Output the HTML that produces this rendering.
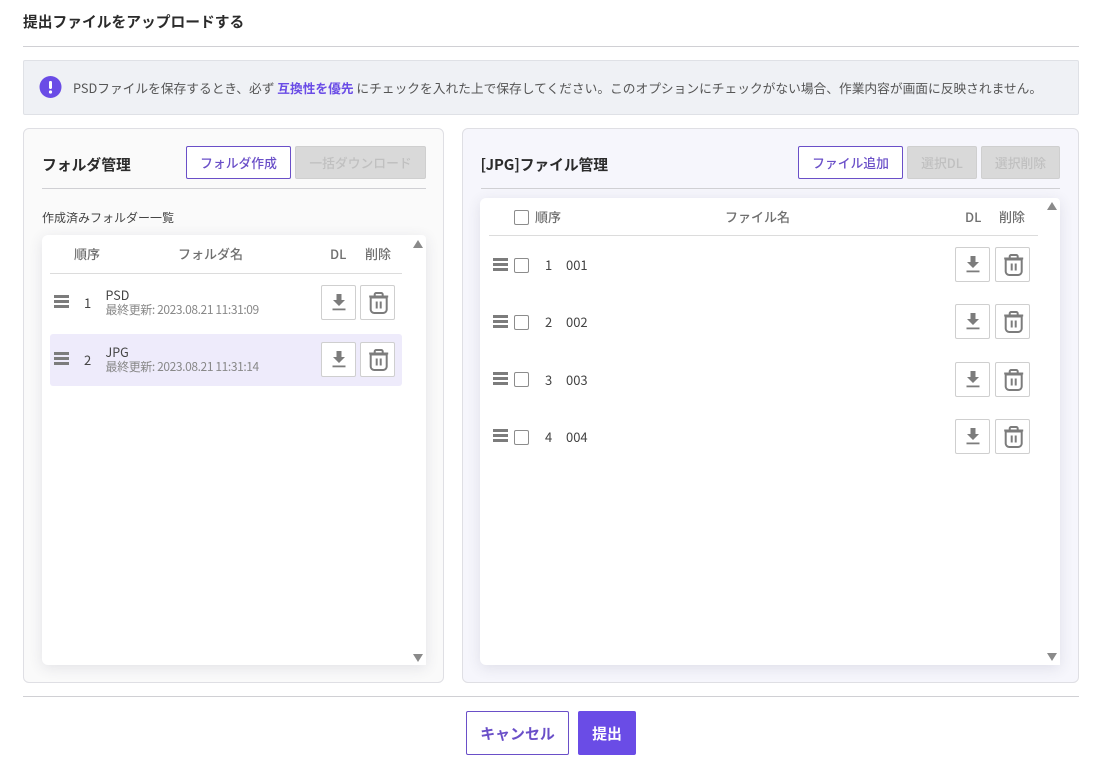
<!DOCTYPE html>
<html lang="ja">
<head>
<meta charset="utf-8">
<title>提出ファイルをアップロードする</title>
<style>
*{box-sizing:border-box}
html,body{margin:0;padding:0;width:1093px;height:767px;overflow:hidden;background:#fff}
body{position:relative;font-family:"Noto Sans CJK JP","Liberation Sans",sans-serif;color:#333;font-size:12px}
.a{position:absolute;white-space:nowrap;line-height:1}
.line{position:absolute;height:1px;background:#d0d0d4}
.panel{position:absolute;top:128px;height:555px;border:1px solid #dfdfe4;border-radius:6px}
.list{position:absolute;background:#fff;border-radius:6px 4px 0 6px;box-shadow:0 3px 14px rgba(60,60,90,.12)}
.btn{position:absolute;top:146px;height:33px;border-radius:2px;font-size:12.800px;font-weight:500;display:flex;align-items:center;justify-content:center;white-space:nowrap}
.pri{background:#fff;border:1px solid #6a4fc8;color:#6a4fc8}
.dis{background:#d9d9d9;border:1px solid #cfcfcf;color:#c0c0c0}
.th{position:absolute;white-space:nowrap;line-height:1;font-size:13px;font-weight:500;color:#6f6f6f}
.ib{position:absolute;width:35px;height:35px;background:#fff;border:1px solid #cfcfcf;border-radius:2px}
.ib svg{position:absolute;left:-1px;top:-1px}
.burger{position:absolute;width:15px;height:13px;border-top:3px solid #7c7c7c;border-bottom:3px solid #7c7c7c}
.burger:after{content:"";position:absolute;left:0;right:0;top:2px;height:3px;background:#7c7c7c}
.cb{position:absolute;width:15px;height:15px;background:#fff;border:1.500px solid #8c8c8c;border-radius:2px}
.row{position:absolute;left:50px;top:334px;width:352px;height:52px;background:#eeebfb;border-radius:3px}
.tu{width:0;height:0;border-left:5.500px solid transparent;border-right:5.500px solid transparent;border-bottom:8px solid #8a8a8a;position:absolute}
.td{width:0;height:0;border-left:5.500px solid transparent;border-right:5.500px solid transparent;border-top:8px solid #8a8a8a;position:absolute}
.n{font-size:13px;color:#444}
.t{font-size:12px;letter-spacing:-.4px;color:#888}
</style>
</head>
<body>
<svg width="0" height="0" style="position:absolute">
<defs>
<g id="dl"><path d="M15.500 9h5v6h3.500l-6 6-6-6h3.500z" fill="#7c7c7c"/><rect x="11.500" y="23.500" width="13" height="1.800" fill="#7c7c7c"/></g>
<g id="tr" fill="none" stroke="#7c7c7c" stroke-width="2" transform="translate(-.8 0)"><path d="M11.500 12.500h16v12a3.500 3.500 0 0 1-3.500 3.500h-9a3.500 3.500 0 0 1-3.500-3.500z"/><path d="M10 11.500h19"/><path d="M15.500 11V9.500a1.500 1.500 0 0 1 1.500-1.500h5a1.500 1.500 0 0 1 1.500 1.500V11"/><path d="M17.500 16.500v7M21.500 16.500v7"/></g>
</defs>
</svg>

<div class="a" style="left:23px;top:15px;font-size:14.750px;font-weight:700;color:#2b2b2b">提出ファイルをアップロードする</div>
<div class="line" style="left:23px;top:46px;width:1056px"></div>

<div style="position:absolute;left:23px;top:60px;width:1056px;height:55px;background:#eff1f5;border:1px solid #dfe1e6;border-radius:2px"></div>
<svg style="position:absolute;left:39px;top:76px" width="23" height="23"><circle cx="11.500" cy="11" r="11" fill="#6a4ce6"/><rect x="10" y="5" width="3" height="8" rx="1.200" fill="#fff"/><circle cx="11.500" cy="16" r="1.600" fill="#fff"/></svg>
<div class="a" style="left:73px;top:81.500px;font-size:12.730px;color:#555">PSDファイルを保存するとき、必ず <b style="color:#6a4ce6;font-weight:700">互換性を優先</b> にチェックを入れた上で保存してください。このオプションにチェックがない場合、作業内容が画面に反映されません。</div>

<!-- left panel -->
<div class="panel" style="left:23px;width:421px;background:#fafafa"></div>
<div class="a" style="left:42px;top:157.500px;font-size:14.800px;font-weight:700;color:#2b2b2b">フォルダ管理</div>
<div class="btn pri" style="left:186px;width:105px">フォルダ作成</div>
<div class="btn dis" style="left:295px;width:131px">一括ダウンロード</div>
<div class="line" style="left:42px;top:188px;width:384px"></div>
<div class="a" style="left:42px;top:212px;font-size:12px;color:#444">作成済みフォルダー一覧</div>

<div class="list" style="left:42px;top:235px;width:384px;height:430px"></div>
<div class="tu" style="left:413px;top:240px"></div>
<div class="td" style="left:413px;top:654px"></div>
<div class="th" style="left:74px;top:247px">順序</div>
<div class="th" style="left:178px;top:247px">フォルダ名</div>
<div class="th" style="left:330px;top:247px">DL</div>
<div class="th" style="left:365px;top:247px">削除</div>
<div class="line" style="left:50px;top:273px;width:352px;background:#dcdcdc"></div>

<div class="burger" style="left:54px;top:295px"></div>
<div class="a n" style="left:84px;top:296px">1</div>
<div class="a" style="left:105.500px;top:289px;font-size:12.500px;color:#444">PSD</div>
<div class="a t" style="left:105.500px;top:304px">最終更新: 2023.08.21 11:31:09</div>
<div class="ib" style="left:321px;top:285px"><svg width="35" height="35"><use href="#dl"/></svg></div>
<div class="ib" style="left:360px;top:285px"><svg width="35" height="35"><use href="#tr"/></svg></div>

<div class="row"></div>
<div class="burger" style="left:54px;top:352px"></div>
<div class="a n" style="left:84px;top:353px">2</div>
<div class="a" style="left:105.500px;top:346px;font-size:12.500px;color:#444">JPG</div>
<div class="a t" style="left:105.500px;top:361px">最終更新: 2023.08.21 11:31:14</div>
<div class="ib" style="left:321px;top:342px"><svg width="35" height="35"><use href="#dl"/></svg></div>
<div class="ib" style="left:360px;top:342px"><svg width="35" height="35"><use href="#tr"/></svg></div>

<!-- right panel -->
<div class="panel" style="left:462px;width:617px;background:#f6f6fc"></div>
<div class="a" style="left:480.500px;top:157.500px;font-size:14.800px;font-weight:700;letter-spacing:-.1px;color:#2b2b2b">[JPG]ファイル管理</div>
<div class="btn pri" style="left:798px;width:105px">ファイル追加</div>
<div class="btn dis" style="left:907px;width:70px">選択DL</div>
<div class="btn dis" style="left:981px;width:79px">選択削除</div>
<div class="line" style="left:481px;top:188px;width:579px"></div>

<div class="list" style="left:480px;top:198px;width:580px;height:467px"></div>
<div class="tu" style="left:1047px;top:202px"></div>
<div class="td" style="left:1047px;top:653px"></div>
<div class="cb" style="left:513.500px;top:210px"></div>
<div class="th" style="left:535px;top:210px">順序</div>
<div class="th" style="left:725px;top:210px">ファイル名</div>
<div class="th" style="left:965px;top:210px">DL</div>
<div class="th" style="left:999px;top:210px">削除</div>
<div class="line" style="left:489px;top:235px;width:549px;background:#dcdcdc"></div>

<div class="burger" style="left:493px;top:258px"></div>
<div class="cb" style="left:513.500px;top:258px"></div>
<div class="a n" style="left:545px;top:258px">1</div>
<div class="a n" style="left:566px;top:258px">001</div>
<div class="ib" style="left:955px;top:247px"><svg width="35" height="35"><use href="#dl"/></svg></div>
<div class="ib" style="left:995px;top:247px"><svg width="35" height="35"><use href="#tr"/></svg></div>

<div class="burger" style="left:493px;top:315px"></div>
<div class="cb" style="left:513.500px;top:315px"></div>
<div class="a n" style="left:545px;top:315px">2</div>
<div class="a n" style="left:566px;top:315px">002</div>
<div class="ib" style="left:955px;top:304px"><svg width="35" height="35"><use href="#dl"/></svg></div>
<div class="ib" style="left:995px;top:304px"><svg width="35" height="35"><use href="#tr"/></svg></div>

<div class="burger" style="left:493px;top:372px"></div>
<div class="cb" style="left:513.500px;top:372px"></div>
<div class="a n" style="left:545px;top:373px">3</div>
<div class="a n" style="left:566px;top:373px">003</div>
<div class="ib" style="left:955px;top:362px"><svg width="35" height="35"><use href="#dl"/></svg></div>
<div class="ib" style="left:995px;top:362px"><svg width="35" height="35"><use href="#tr"/></svg></div>

<div class="burger" style="left:493px;top:429px"></div>
<div class="cb" style="left:513.500px;top:430px"></div>
<div class="a n" style="left:545px;top:430px">4</div>
<div class="a n" style="left:566px;top:430px">004</div>
<div class="ib" style="left:955px;top:419px"><svg width="35" height="35"><use href="#dl"/></svg></div>
<div class="ib" style="left:995px;top:419px"><svg width="35" height="35"><use href="#tr"/></svg></div>

<div class="line" style="left:23px;top:696px;width:1056px"></div>
<div class="btn pri" style="left:466px;top:711px;width:103px;height:44px;font-size:14.900px;font-weight:700">キャンセル</div>
<div class="btn" style="left:578px;top:711px;width:58px;height:44px;background:#6a4ce6;color:#fff;font-size:14.900px;font-weight:700">提出</div>
</body>
</html>
